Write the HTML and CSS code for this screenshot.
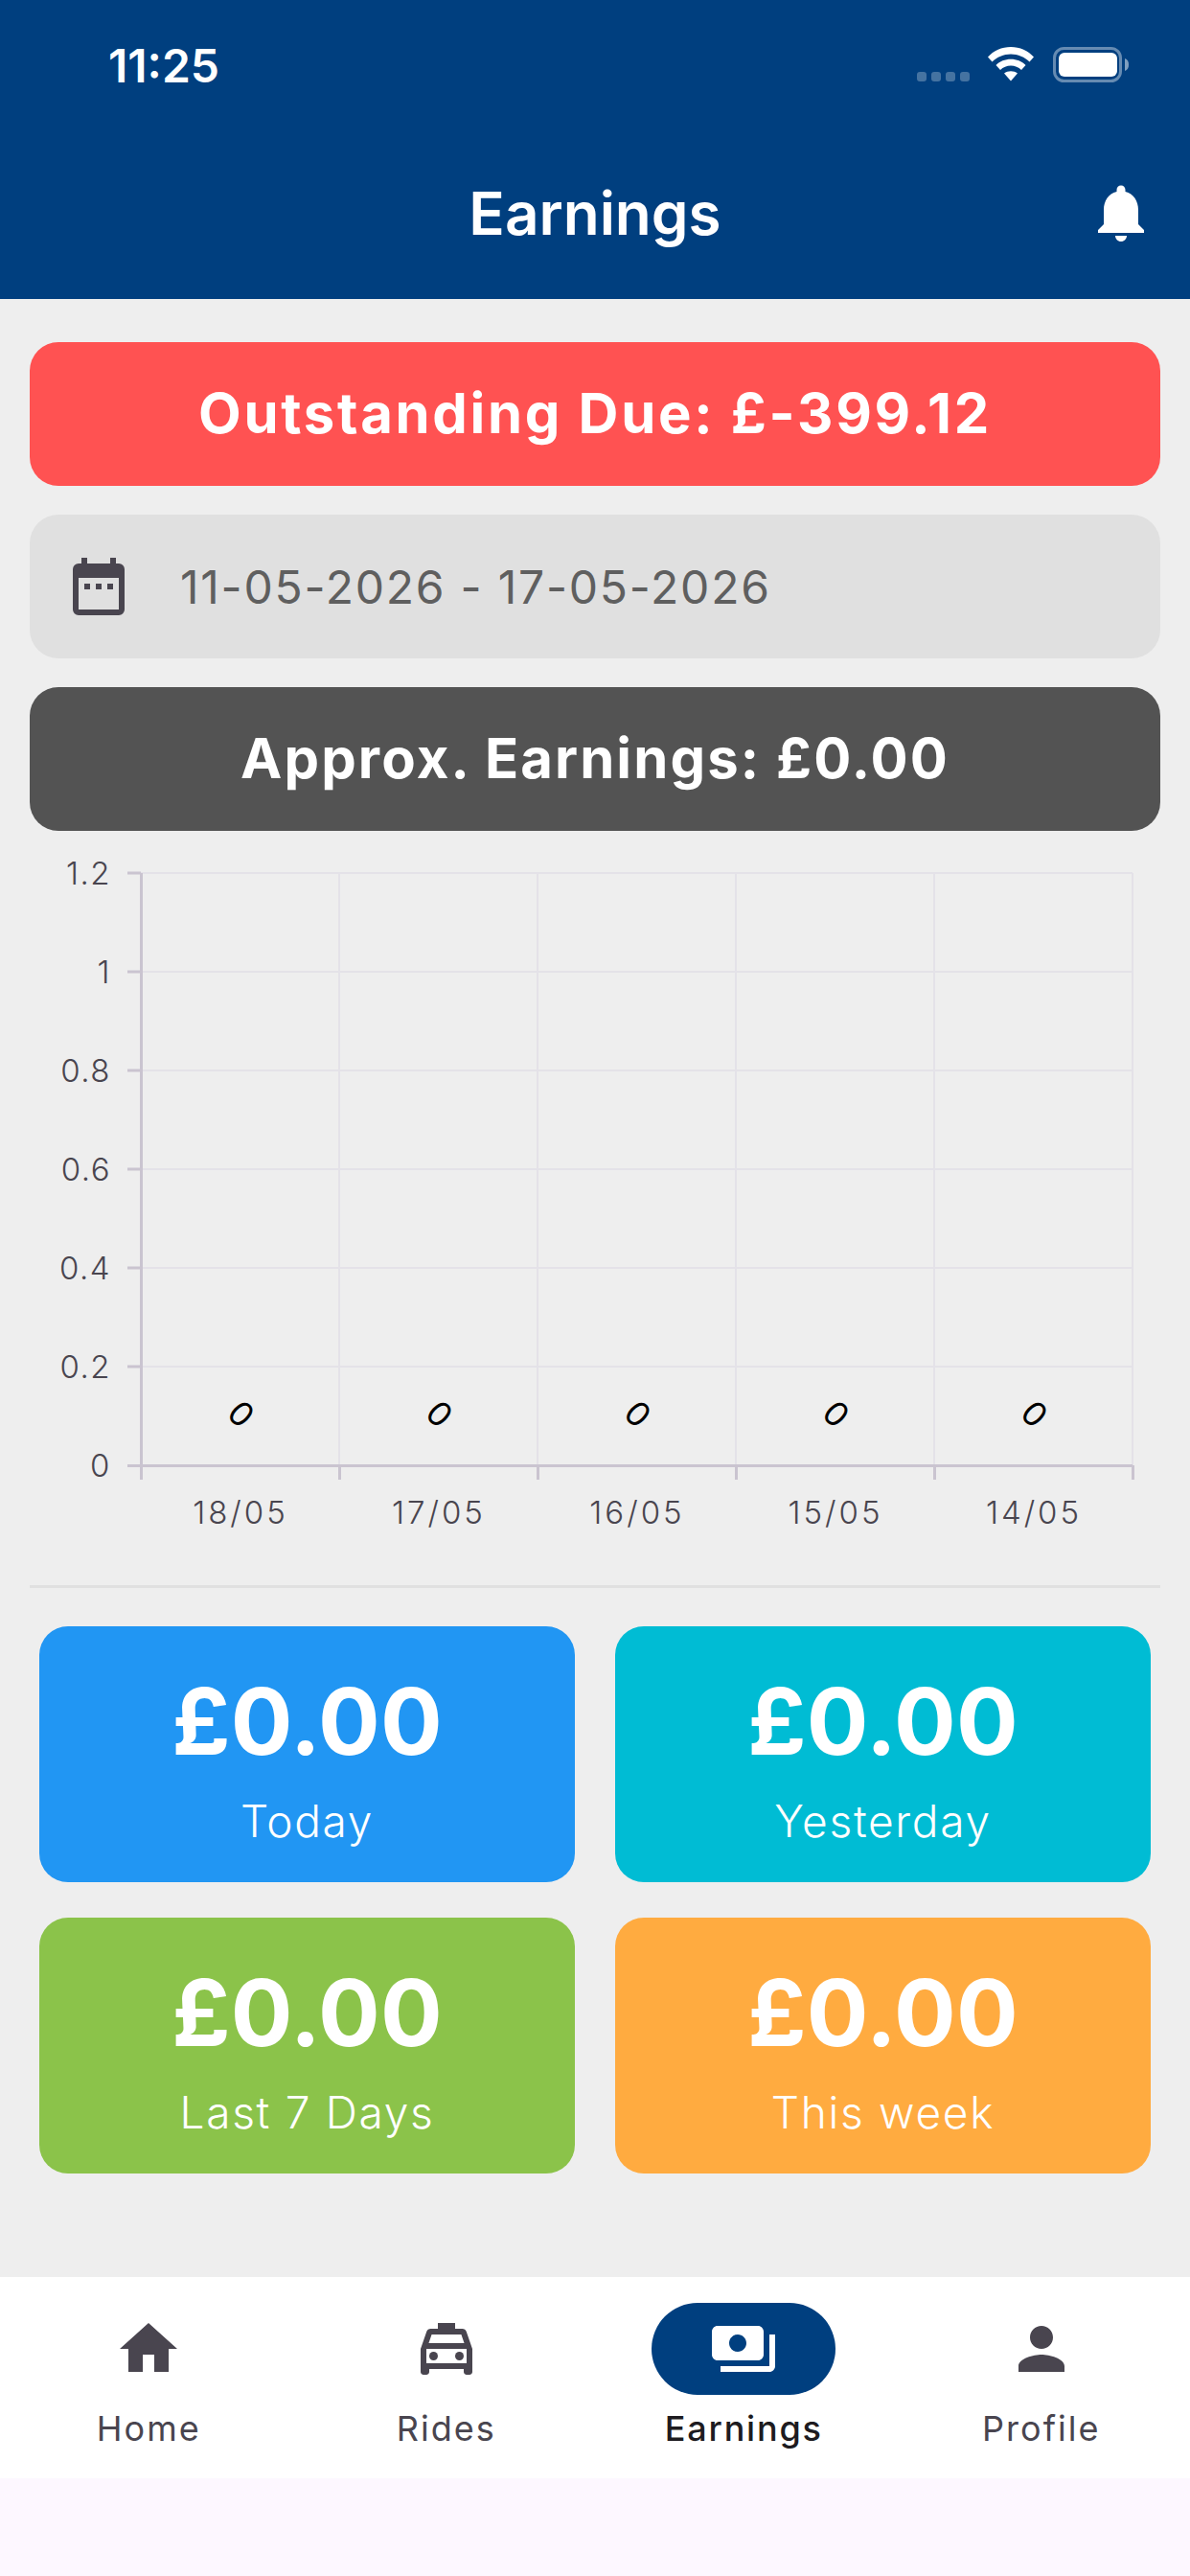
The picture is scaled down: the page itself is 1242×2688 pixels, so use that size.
FILE: index.html
```html
<!DOCTYPE html>
<html lang="en">
<head>
<meta charset="utf-8">
<title>Earnings</title>
<link rel="stylesheet" href="styles.css">
</head>
<body>
<div class="app">
  <header class="top">
    <div class="status">
      <span class="time">11:25</span>
      <div class="status-icons">
        <svg class="signal" width="56" height="10" viewBox="0 0 56 10"><rect x="0" y="0" width="10" height="10" rx="3"/><rect x="15" y="0" width="10" height="10" rx="3"/><rect x="30" y="0" width="10" height="10" rx="3"/><rect x="45" y="0" width="10" height="10" rx="3"/></svg>
        <svg class="wifi" width="48" height="36" viewBox="0 0 48 36"><path d="M0 10.500C6 4 14.500 0 24 0s18 4 24 10.500l-4.500 5C38.500 10.500 31.500 7.500 24 7.500S9.500 10.500 4.500 15.500z"/><path d="M8.500 19C12.500 15 18 12.800 24 12.800S35.500 15 39.500 19L35 24c-3-2.800-6.800-4.400-11-4.400S16 21.200 13 24z"/><path d="M17 27.500c2-1.500 4.500-2.300 7-2.300s5 .8 7 2.300l-7 8z"/></svg>
        <svg class="battery" width="80" height="37" viewBox="0 0 80 37"><rect x="1.500" y="1.500" width="69" height="34" rx="10" class="batt-shell"/><rect x="6" y="6" width="61" height="25" rx="6" class="batt-fill"/><path d="M75 12c3 1 4 3.500 4 6.500s-1 5.500-4 6.500z" class="batt-cap"/></svg>
      </div>
    </div>
    <div class="title-row">
      <h1 class="title">Earnings</h1>
      <svg class="bell" width="72" height="72" viewBox="0 0 24 24"><path d="M12 22c1.100 0 2-.9 2-2h-4c0 1.100.89 2 2 2zm6-6v-5c0-3.070-1.640-5.640-4.500-6.320V4c0-.83-.67-1.500-1.500-1.500s-1.500.67-1.500 1.500v.68C7.630 5.360 6 7.920 6 11v5l-2 2v1h16v-1l-2-2z"/></svg>
    </div>
  </header>

  <main class="content">
    <div class="banner banner-due">Outstanding Due: £-399.12</div>
    <div class="date-field">
      <svg class="cal" width="54" height="60" viewBox="0 0 54 60"><path d="M9 0h6v6h24V0h6v6h3a6 6 0 0 1 6 6v42a6 6 0 0 1-6 6H6a6 6 0 0 1-6-6V12a6 6 0 0 1 6-6h3zM6 21v33h42V21z" fill-rule="evenodd"/><rect x="12" y="27" width="6" height="6"/><rect x="24" y="27" width="6" height="6"/><rect x="36" y="27" width="6" height="6"/></svg>
      <span class="date-text">11-05-2026 - 17-05-2026</span>
    </div>
    <div class="banner banner-approx">Approx. Earnings: £0.00</div>

    <svg class="chart" width="1242" height="720" viewBox="0 0 1242 720">
      <g transform="translate(0 19)">
        <g class="grid">
          <path d="M147 15H1182M147 118H1182M147 221H1182M147 324H1182M147 427H1182M147 530H1182"/>
          <path d="M354 15V633M561 15V633M768 15V633M975 15V633M1182 15V633"/>
        </g>
        <g class="axis">
          <path d="M147.500 15V648M133 633.500H1182"/>
          <path d="M133 15h14M133 118h14M133 221h14M133 324h14M133 427h14M133 530h14"/>
          <path d="M354.500 633v15M561.500 633v15M768.500 633v15M975.500 633v15M1182.500 633v15"/>
        </g>
        <g class="ylabels">
          <text x="116" y="27">1.2</text>
          <text x="116" y="130">1</text>
          <text x="116" y="233">0.8</text>
          <text x="116" y="336">0.6</text>
          <text x="116" y="439">0.4</text>
          <text x="116" y="542">0.2</text>
          <text x="116" y="645">0</text>
        </g>
        <g class="xlabels">
          <text x="251" y="694">18/05</text>
          <text x="458" y="694">17/05</text>
          <text x="665" y="694">16/05</text>
          <text x="872" y="694">15/05</text>
          <text x="1079" y="694">14/05</text>
        </g>
        <g class="zeros">
          <text transform="translate(252 579) rotate(45)">0</text>
          <text transform="translate(459 579) rotate(45)">0</text>
          <text transform="translate(666 579) rotate(45)">0</text>
          <text transform="translate(873 579) rotate(45)">0</text>
          <text transform="translate(1080 579) rotate(45)">0</text>
        </g>
      </g>
    </svg>

    <div class="divider"></div>

    <div class="stats">
      <div class="stat stat-blue"><div class="stat-value">£0.00</div><div class="stat-label">Today</div></div>
      <div class="stat stat-cyan"><div class="stat-value">£0.00</div><div class="stat-label">Yesterday</div></div>
      <div class="stat stat-green"><div class="stat-value">£0.00</div><div class="stat-label">Last 7 Days</div></div>
      <div class="stat stat-orange"><div class="stat-value">£0.00</div><div class="stat-label">This week</div></div>
    </div>
  </main>

  <nav class="nav">
    <div class="tab">
      <div class="tab-icon"><svg width="72" height="72" viewBox="0 0 24 24"><path d="M10 20v-6h4v6h5v-8h3L12 3 2 12h3v8z"/></svg></div>
      <span class="tab-label">Home</span>
    </div>
    <div class="tab">
      <div class="tab-icon"><svg width="72" height="72" viewBox="0 0 24 24"><path d="M18.920 6.010C18.720 5.420 18.160 5 17.500 5H15V3H9v2H6.500c-.66 0-1.210.42-1.420 1.010L3 12v8c0 .55.45 1 1 1h1c.55 0 1-.45 1-1v-1h12v1c0 .55.45 1 1 1h1c.55 0 1-.45 1-1v-8l-2.080-5.990zM6.850 7h10.290l1.040 3H5.810l1.040-3zM19 17H5v-5h14v5z"/><circle cx="7.500" cy="14.500" r="1.500"/><circle cx="16.500" cy="14.500" r="1.500"/></svg></div>
      <span class="tab-label">Rides</span>
    </div>
    <div class="tab tab-active">
      <div class="tab-icon"><svg width="72" height="72" viewBox="0 0 24 24"><path d="M19 14V6c0-1.100-.9-2-2-2H3c-1.100 0-2 .9-2 2v8c0 1.100.9 2 2 2h14c1.100 0 2-.9 2-2zm-9-1c-1.660 0-3-1.340-3-3s1.340-3 3-3 3 1.340 3 3-1.340 3-3 3zm13-6v11c0 1.100-.9 2-2 2H4v-2h17V7h2z"/></svg></div>
      <span class="tab-label">Earnings</span>
    </div>
    <div class="tab">
      <div class="tab-icon"><svg width="72" height="72" viewBox="0 0 24 24"><path d="M12 12c2.210 0 4-1.790 4-4s-1.790-4-4-4-4 1.790-4 4 1.790 4 4 4zm0 2c-2.670 0-8 1.340-8 4v2h16v-2c0-2.660-5.330-4-8-4z"/></svg></div>
      <span class="tab-label">Profile</span>
    </div>
  </nav>
  <div class="home-area"></div>
</div>
</body>
</html>
```
FILE: styles.css
```css
* { box-sizing: border-box; }
html, body { margin: 0; padding: 0; }
body { font-family: Inter, "Liberation Sans", sans-serif; background: #eeeeee; }
.app { width: 1242px; height: 2688px; display: flex; flex-direction: column; overflow: hidden; }

.top { height: 312px; background: #003f7f; color: #fff; flex: none; display: flex; flex-direction: column; }
.status { height: 132px; display: flex; justify-content: space-between; padding: 48px 63px 0 113px; }
.time { font-size: 48px; font-weight: 600; line-height: 42px; }
.status-icons { display: flex; align-items: flex-start; height: 40px; }
.signal { fill: rgba(255,255,255,.27); margin-top: 27px; margin-right: 18px; }
.wifi { fill: #fff; margin-top: 1px; margin-right: 20px; }
.battery { margin-top: 1px; }
.batt-shell { fill: none; stroke: rgba(255,255,255,.4); stroke-width: 3; }
.batt-fill { fill: #fff; }
.batt-cap { fill: rgba(255,255,255,.5); }

.title-row { flex: 1; display: flex; align-items: flex-start; justify-content: center; position: relative; }
.title { margin: 55px 0 0; font-size: 62px; font-weight: 600; line-height: 72px; }
.bell { position: absolute; right: 36px; top: 54px; fill: #fff; }

.content { flex: 1; display: flex; flex-direction: column; padding: 45px 31px 0; }
.banner { height: 150px; flex: none; border-radius: 30px; display: flex; align-items: center; justify-content: center; color: #fff; font-size: 58px; font-weight: 700; padding-bottom: 3px; }
.banner-due { background: #ff5252; letter-spacing: 2.7px; }
.banner-approx { background: #535353; letter-spacing: 2.1px; }
.date-field { height: 150px; flex: none; margin: 30px 0; border-radius: 30px; background: #e0e0e0; display: flex; align-items: center; padding-left: 45px; }
.cal { fill: #49454f; margin-right: 58px; }
.date-text { font-size: 48px; color: #5f5f5f; letter-spacing: 1.77px; }

.chart { flex: none; margin: 10px -31px 0; display: block; }
.grid path { fill: none; stroke: #e4e2e8; stroke-width: 2; }
.axis path { fill: none; stroke: #cac4d0; stroke-width: 3; }
.ylabels text { font-size: 33px; font-weight: 350; fill: #49454f; text-anchor: end; letter-spacing: 1.5px; font-family: Inter, sans-serif; }
.xlabels text { font-size: 33px; font-weight: 350; fill: #49454f; text-anchor: middle; letter-spacing: 3px; font-family: Inter, sans-serif; }
.zeros text { font-size: 35px; fill: #000; text-anchor: middle; font-family: Inter, sans-serif; dominant-baseline: central; }

.divider { height: 3px; flex: none; background: #e0e0e0; margin-top: 57px; }
.stats { display: grid; grid-template-columns: 559px 559px; grid-auto-rows: 267px; justify-content: space-between; row-gap: 37px; padding: 0 10px; margin-top: 40px; }
.stat { border-radius: 30px; color: #fff; display: flex; flex-direction: column; align-items: center; }
.stat-blue { background: #2196f3; }
.stat-cyan { background: #00bcd4; }
.stat-green { background: #8bc34a; }
.stat-orange { background: #ffab40; }
.stat-value { font-size: 96px; font-weight: 700; line-height: 116px; margin-top: 41px; letter-spacing: .1px; }
.stat-label { font-size: 46px; line-height: 58px; margin-top: 17px; letter-spacing: 1.7px; font-weight: 350; }

.nav { height: 210px; flex: none; background: #fff; display: grid; grid-template-columns: repeat(4, 1fr); padding-top: 27px; }
.tab { display: flex; flex-direction: column; align-items: center; }
.tab-icon { width: 192px; height: 96px; border-radius: 48px; display: flex; align-items: center; justify-content: center; fill: #49454f; }
.tab-label { font-size: 36px; line-height: 48px; margin-top: 11px; color: #49454f; letter-spacing: 2px; font-weight: 400; }
.tab-active .tab-icon { background: #003f7f; fill: #fff; }
.tab-active .tab-label { color: #1d1b20; font-weight: 500; letter-spacing: 1.8px; }
.home-area { height: 102px; flex: none; background: #fdf7ff; }
```
